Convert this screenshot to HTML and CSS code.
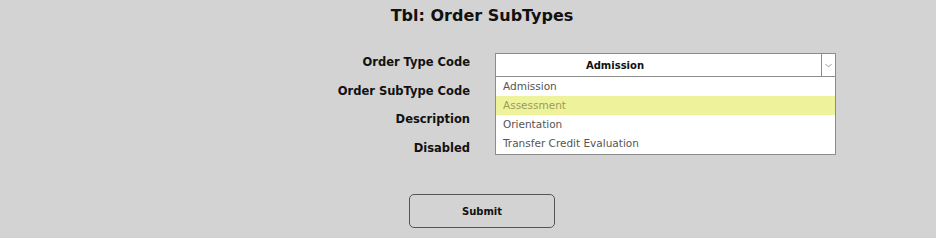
FILE: index.html
```html
<!DOCTYPE html>
<html lang="en">
<head>
    <meta charset="UTF-8">
    <meta name="viewport" content="width=device-width, initial-scale=1.0">
    <title>Tbl: Order SubTypes</title>
    <link rel="stylesheet" href="styles.css">
</head>
<body>

    <div class="page">
        <h1>Tbl: Order SubTypes</h1>

        <form id="subTypeForm" class="form">
            <label for="orderType">Order Type Code</label>
            <div class="field">
                <div class="select" id="orderType">
                    <span class="select-value">Admission</span>
                    <span class="select-arrow">
                        <svg width="7" height="5" viewBox="0 0 7 5"><path d="M0.5 1 L3.5 4 L6.5 1" fill="none" stroke="#9a9a9a" stroke-width="1"/></svg>
                    </span>
                </div>
                <ul class="options">
                    <li>Admission</li>
                    <li class="hover">Assessment</li>
                    <li>Orientation</li>
                    <li>Transfer Credit Evaluation</li>
                </ul>
            </div>

            <label for="subTypeCode">Order SubType Code</label>
            <div class="field"><input type="text" id="subTypeCode"></div>

            <label for="description">Description</label>
            <div class="field"><input type="text" id="description"></div>

            <label for="disabled">Disabled</label>
            <div class="field"><input type="checkbox" id="disabled"></div>
        </form>

        <div class="actions">
            <button type="button" class="button">Submit</button>
        </div>
    </div>

</body>
</html>
```

FILE: styles.css
```css
body {
    margin: 0;
    padding: 0;
    background-color: #d3d3d3;
    font-family: "DejaVu Sans", sans-serif;
    color: #111;
}

.page {
    width: 936px;
    padding-left: 28px;
    box-sizing: border-box;
}

h1 {
    margin: 0;
    padding-top: 5px;
    text-align: center;
    font-size: 16px;
    font-weight: bold;
    line-height: 22px;
}

.form {
    display: grid;
    grid-template-columns: 200px 341px;
    grid-auto-rows: 24px;
    column-gap: 25px;
    row-gap: 4.5px;
    margin-top: 26px;
    margin-left: 242px;
}

label {
    text-align: right;
    font-size: 11.5px;
    font-weight: bold;
    line-height: 18px;
}

.field {
    position: relative;
}

.select {
    display: flex;
    height: 24px;
    box-sizing: border-box;
    background-color: #fff;
    border: 1px solid #8c8c8c;
}

.select-value {
    flex: 1;
    padding-right: 87px;
    text-align: center;
    font-size: 10px;
    font-weight: bold;
    line-height: 23px;
}

.select-arrow {
    width: 13px;
    border-left: 1px solid #8c8c8c;
    display: flex;
    align-items: center;
    justify-content: center;
}

.options {
    position: absolute;
    top: 23px;
    left: 0;
    right: 0;
    z-index: 2;
    margin: 0;
    padding: 0 0 1px;
    list-style: none;
    background-color: #fff;
    border: 1px solid #8c8c8c;
}

.options li {
    height: 19px;
    padding-left: 7px;
    font-size: 10.5px;
    line-height: 19px;
    color: #555;
}

.options li.hover {
    background-color: #eef39b;
    color: #9b9b5c;
}

input[type="text"] {
    width: 100%;
    height: 20px;
    box-sizing: border-box;
    border: 1px solid #8c8c8c;
}

input[type="checkbox"] {
    margin: 2px 0 0;
}

.actions {
    display: flex;
    justify-content: center;
    margin-top: 31px;
}

.button {
    width: 146px;
    height: 34px;
    padding-top: 2px;
    background-color: #d3d3d3;
    border: 1px solid #555;
    border-radius: 5px;
    font-family: "DejaVu Sans", sans-serif;
    font-size: 10px;
    font-weight: bold;
    color: #111;
}
```
